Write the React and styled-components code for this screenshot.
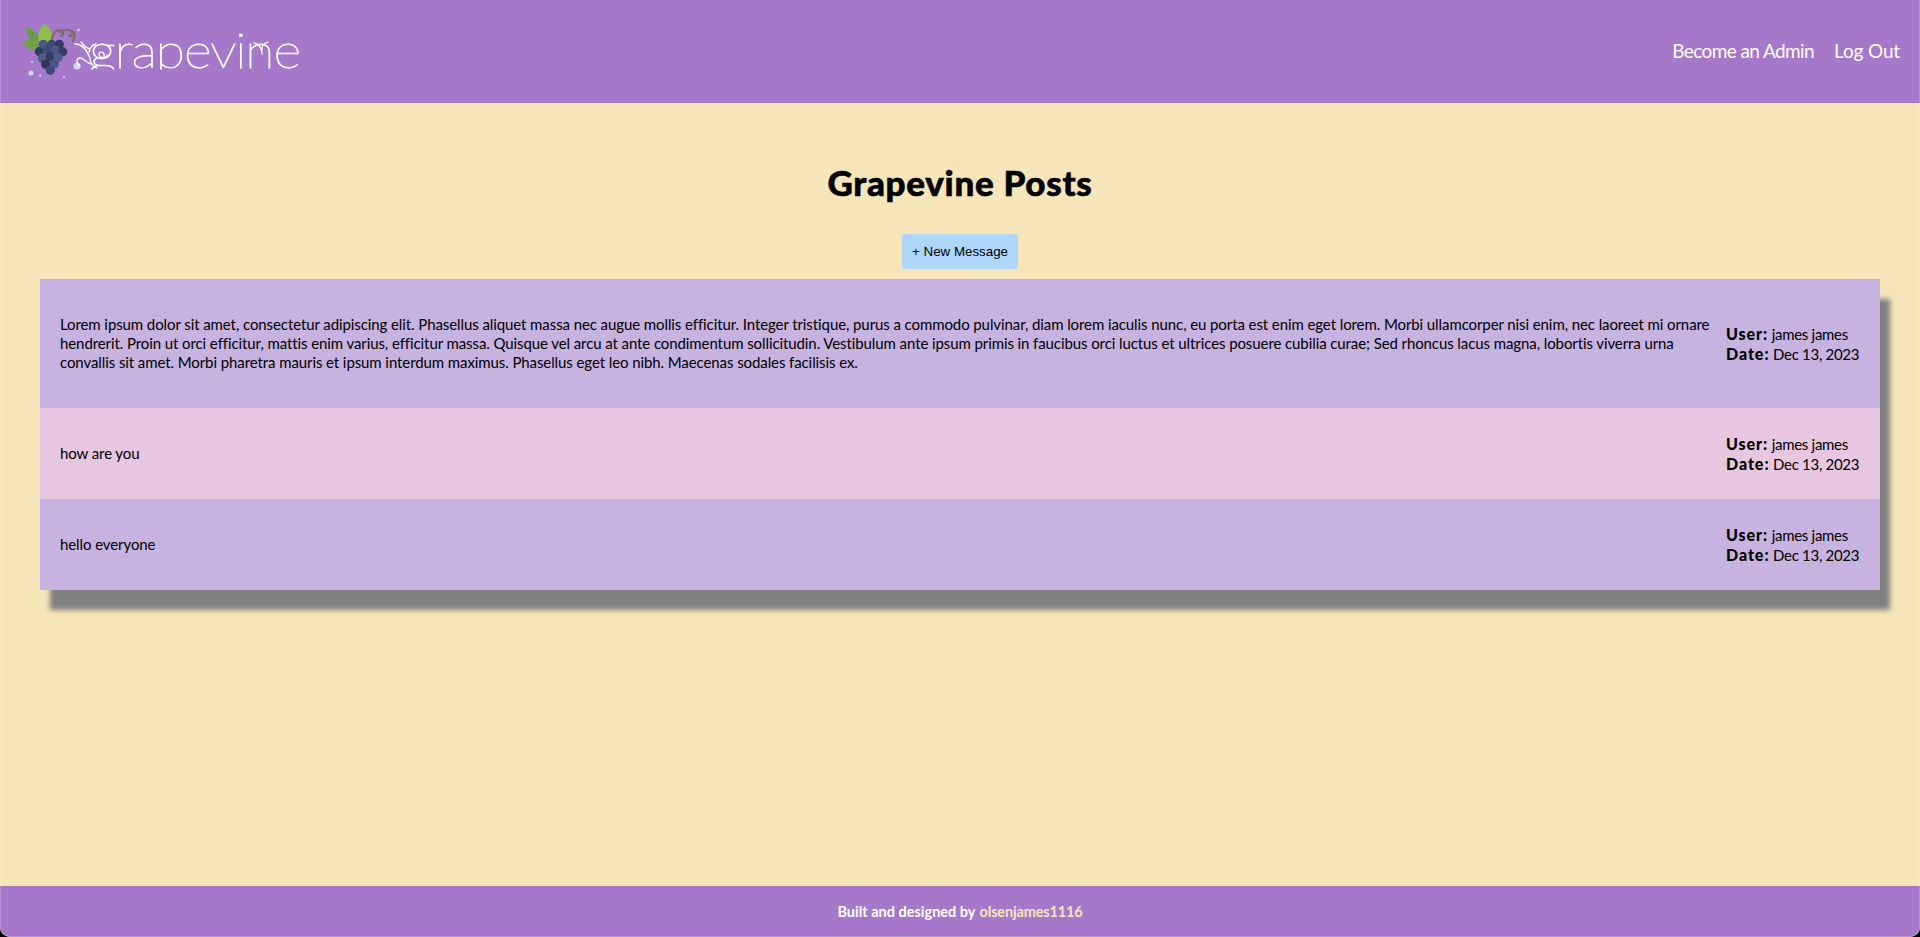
import React from "react";
import styled, { createGlobalStyle } from "styled-components";

const Global = createGlobalStyle`
  html, body { margin: 0; padding: 0; background: #000; }
  body { font-family: Lato, "Open Sans", sans-serif; color: #000; }
`;

const Page = styled.div`
  position: relative;
  min-height: 100vh;
  display: flex;
  flex-direction: column;
  background: #f5e5b9;
  border-radius: 0 0 10px 10px;
  overflow: hidden;

  &::after {
    content: "";
    position: absolute;
    inset: 0;
    border-radius: inherit;
    pointer-events: none;
    box-shadow: inset 1px 0 rgba(255, 255, 255, 0.2), inset -1px 0 rgba(255, 255, 255, 0.2),
      inset 0 -1px rgba(255, 255, 255, 0.2);
  }
`;

const Header = styled.header`
  height: 103px;
  flex: none;
  display: flex;
  align-items: center;
  justify-content: space-between;
  padding: 0 20px 0 10px;
  background: #a678ca;
`;

const Logo = styled.svg`
  display: block;
  width: 300px;
  height: 71px;
`;

const Nav = styled.nav`
  display: flex;
  gap: 20px;
  margin-bottom: 3px;
`;

const NavLink = styled.a`
  color: #fff;
  font-size: 19px;
  line-height: 23px;
  letter-spacing: ${(p) => p.$spacing};
  text-decoration: none;
`;

const Main = styled.main`
  flex: 1;
  display: flex;
  flex-direction: column;
  align-items: center;
  padding: 61px 40px 0;
`;

const Title = styled.h1`
  margin: 0;
  font-size: 35px;
  line-height: 37px;
  font-weight: 900;
  letter-spacing: 0.7px;
  -webkit-text-stroke: 0.6px #000;
`;

const NewButton = styled.button`
  margin-top: 33px;
  width: 116px;
  height: 35px;
  padding: 0;
  border: 0;
  border-radius: 3px;
  background: #aed6f9;
  color: #000;
  font: 13.33px "Liberation Sans", Arial, sans-serif;
`;

const List = styled.div`
  width: 100%;
  margin-top: 10px;
  box-shadow: 10px 20px 5px #808080;
`;

const Row = styled.article`
  display: flex;
  align-items: center;
  gap: 10px;
  padding: 20px;
  background: ${(p) => (p.$alt ? "#e6c7df" : "#c6b3e0")};
`;

const Body = styled.p`
  flex: 1;
  margin: 16px 0;
  font-size: 15px;
  line-height: 19px;
  letter-spacing: -0.09px;
`;

const Meta = styled.div`
  flex: none;
  width: 134px;
  font-size: 15px;
  line-height: 19px;
  letter-spacing: -0.3px;
`;

const MetaLine = styled.div`
  white-space: nowrap;
`;

const Label = styled.strong`
  font-size: 16px;
  font-weight: 900;
  letter-spacing: 0.95px;
`;

const Footer = styled.footer`
  height: 51px;
  flex: none;
  display: flex;
  align-items: center;
  justify-content: center;
  gap: 4px;
  background: #a678ca;
  color: #fff;
  font-size: 14.5px;
  font-weight: 700;
`;

const FooterLink = styled.a`
  color: #f5e5b9;
  font-weight: 700;
  letter-spacing: -0.15px;
  text-decoration: none;
`;

const grapes = [
  [43.3, 44.3, "#4a5785"], [51.7, 44.3, "#3f4a78"], [59.3, 44.3, "#333b62"],
  [39.3, 51.7, "#333b62"], [47.3, 50, "#3f4a78"], [55.3, 50, "#4a5785"], [62.7, 51.7, "#333b62"],
  [42.3, 58.3, "#4f5d8c"], [50, 56.7, "#333b62"], [58.3, 57.3, "#4f5d8c"],
  [45.7, 64.3, "#2f3558"], [54.3, 64, "#4a5785"],
  [50.3, 70.3, "#3f4a78"],
];

const dots = [
  [31, 73, 2.6], [40, 75.5, 1.1], [64, 77, 1.1], [78.5, 30, 1.2], [32, 62, 1.1], [77, 66, 3.6],
];

function LogoMark() {
  return (
    <Logo viewBox="10 16 300 71" aria-label="Grapevine">
      <defs>
        <clipPath id="wordmark-clip">
          <rect x="80" y="30" width="230" height="39.5" />
        </clipPath>
      </defs>
      <path d="M25 27 C32 28 38 32 40 42 C34 44 27 38 25 27Z" fill="#6f9c4c" />
      <path d="M23 43 C28 37 35 38 42 49 C35 52 27 49 23 43Z" fill="#6fa344" />
      <path d="M44 24 C50 27 53 33 51 41 L39 42 C37 35 40 28 44 24Z" fill="#8fc047" />
      <circle cx="33" cy="34" r="0.8" fill="#4f6f3a" />
      <path d="M52 39 C53 33 56 30 60 30 C64 31 64 36 61 36 M60 32 C65 29 70 29 72 32 C73 35 71 37 69 35 M68 30 C74 30 76 34 73 41" fill="none" stroke="#7c6a66" strokeWidth="2.2" strokeLinecap="round" />
      {grapes.map(([cx, cy, fill], i) => (
        <circle key={i} cx={cx} cy={cy} r="4.6" fill={fill} />
      ))}
      {dots.map(([cx, cy, r], i) => (
        <circle key={i} cx={cx} cy={cy} r={r} fill="#cfd8ee" />
      ))}
      <g fill="none" stroke="#fff" strokeWidth="1.3" strokeLinecap="round">
        <path d="M75 44 C82 44 87 50 90 58 C90 62 92 66 97 68" />
        <path d="M80 66 C76 64 76 58 80 58 C85 58 86 64 92 64" />
        <path d="M81 42 C84 46 86 48 90 49 M96 44 C92 45 90 47 89 52" />
        <path d="M104 56 C105 52 100 51 99 54 C99 58 105 59 108 55" />
        <path d="M254 43 C258 44 262 46 262 54 M268 42 C262 44 262 46 262 50" />
      </g>
      <g clipPath="url(#wordmark-clip)">
        <text transform="translate(89 68) scale(1.14 1)" fontFamily="Lato, sans-serif" fontWeight="100" fontSize="47" fill="#fff" stroke="#fff" strokeWidth="0.9" textLength="186" lengthAdjust="spacing">grapevine</text>
      </g>
    </Logo>
  );
}

const posts = [
  {
    text: "Lorem ipsum dolor sit amet, consectetur adipiscing elit. Phasellus aliquet massa nec augue mollis efficitur. Integer tristique, purus a commodo pulvinar, diam lorem iaculis nunc, eu porta est enim eget lorem. Morbi ullamcorper nisi enim, nec laoreet mi ornare hendrerit. Proin ut orci efficitur, mattis enim varius, efficitur massa. Quisque vel arcu at ante condimentum sollicitudin. Vestibulum ante ipsum primis in faucibus orci luctus et ultrices posuere cubilia curae; Sed rhoncus lacus magna, lobortis viverra urna convallis sit amet. Morbi pharetra mauris et ipsum interdum maximus. Phasellus eget leo nibh. Maecenas sodales facilisis ex.",
  },
  { text: "how are you", alt: true },
  { text: "hello everyone" },
];

export default function App() {
  return (
    <>
      <Global />
      <Page>
        <Header>
          <LogoMark />
          <Nav>
            <NavLink href="#" $spacing="-0.6px">Become an Admin</NavLink>
            <NavLink href="#" $spacing="-0.15px">Log Out</NavLink>
          </Nav>
        </Header>
        <Main>
          <Title>Grapevine Posts</Title>
          <NewButton>+ New Message</NewButton>
          <List>
            {posts.map((post, i) => (
              <Row key={i} $alt={post.alt}>
                <Body>{post.text}</Body>
                <Meta>
                  <MetaLine><Label>User:</Label> james james</MetaLine>
                  <MetaLine><Label>Date:</Label> Dec 13, 2023</MetaLine>
                </Meta>
              </Row>
            ))}
          </List>
        </Main>
        <Footer>
          Built and designed by <FooterLink href="#">olsenjames1116</FooterLink>
        </Footer>
      </Page>
    </>
  );
}
